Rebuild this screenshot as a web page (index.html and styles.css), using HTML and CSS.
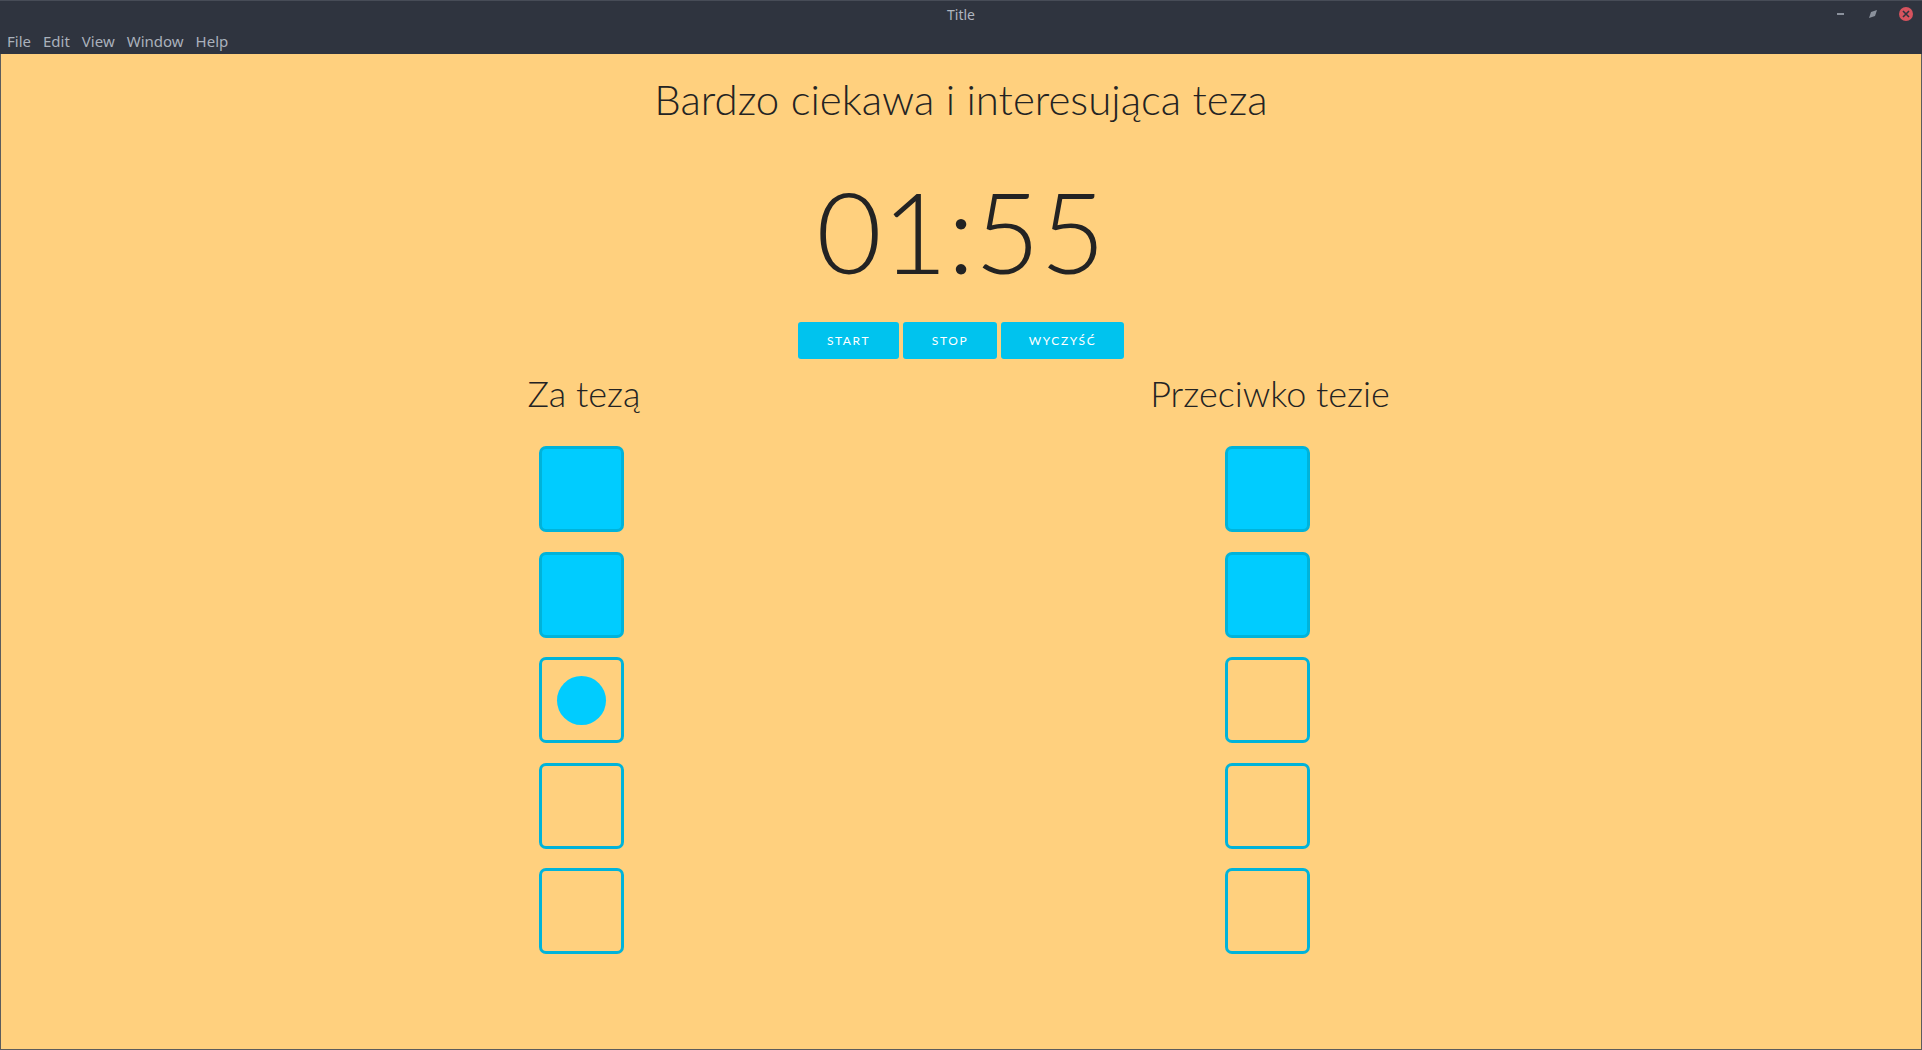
FILE: index.html
```html
<!DOCTYPE html>
<html lang="pl">
<head>
<meta charset="utf-8">
<title>Title</title>
<link rel="stylesheet" href="styles.css">
</head>
<body>
<div class="window">
  <div class="titlebar">
    <div class="title">Title</div>
    <div class="controls">
      <svg class="ctl" width="14" height="14" viewBox="0 0 14 14"><rect x="3" y="6" width="7" height="2" fill="#8b919c"/></svg>
      <svg class="ctl" width="14" height="14" viewBox="0 0 14 14"><path d="M5 5 L11 3 L9 9 Z M3 11 L5 5 L9 9 Z" fill="#8b919c"/></svg>
      <svg class="ctl close" width="16" height="16" viewBox="0 0 16 16"><circle cx="8" cy="8" r="7" fill="#d6535e"/><path d="M5 5 L11 11 M11 5 L5 11" stroke="#2f343f" stroke-width="1.6"/></svg>
    </div>
  </div>
  <div class="menubar">
    <span class="menu">File</span>
    <span class="menu">Edit</span>
    <span class="menu">View</span>
    <span class="menu">Window</span>
    <span class="menu">Help</span>
  </div>
  <main class="content">
    <h1 class="thesis">Bardzo ciekawa i interesująca teza</h1>
    <div class="timer">01:55</div>
    <div class="buttons">
      <button class="btn btn-start">START</button>
      <button class="btn btn-stop">STOP</button>
      <button class="btn btn-clear">WYCZYŚĆ</button>
    </div>
    <div class="columns">
      <section class="col">
        <h2 class="col-title">Za tezą</h2>
        <div class="boxes">
          <div class="box filled"></div>
          <div class="box filled"></div>
          <div class="box"><div class="dot"></div></div>
          <div class="box"></div>
          <div class="box"></div>
        </div>
      </section>
      <section class="col">
        <h2 class="col-title">Przeciwko tezie</h2>
        <div class="boxes">
          <div class="box filled"></div>
          <div class="box filled"></div>
          <div class="box"></div>
          <div class="box"></div>
          <div class="box"></div>
        </div>
      </section>
    </div>
  </main>
</div>
</body>
</html>
```

FILE: styles.css
```css
* { box-sizing: border-box; }
html, body { margin: 0; padding: 0; width: 1922px; height: 1050px; overflow: hidden; }
body { background: #5a5a5a; font-family: "Noto Sans", sans-serif; }

.window {
  width: 1922px;
  height: 1050px;
  display: flex;
  flex-direction: column;
  background: #2f343f;
  border-top: 1px solid #474c57;
}

.titlebar {
  position: relative;
  height: 26px;
  display: flex;
  align-items: center;
  justify-content: center;
}
.title {
  color: #afb5bf;
  font-size: 14px;
  line-height: 26px;
  padding-top: 2px;
}
.controls {
  position: absolute;
  right: 8px;
  top: 5px;
  display: flex;
  align-items: center;
  gap: 18px;
}
.ctl { display: block; }

.menubar {
  height: 27px;
  display: flex;
  align-items: center;
  padding-left: 7px;
  gap: 12px;
}
.menu {
  color: #aab1bc;
  font-size: 15px;
  line-height: 27px;
  padding-top: 1px;
}

.content {
  flex: 1;
  background: #ffd07e;
  border-left: 1px solid #5c5c5c;
  border-right: 1px solid #5c5c5c;
  border-bottom: 1px solid #5c5c5c;
  display: flex;
  flex-direction: column;
  align-items: center;
  color: #232323;
  font-family: "Lato", sans-serif;
}

.thesis {
  margin: 19px 0 0 0;
  font-weight: 300;
  font-size: 42px;
  line-height: 52px;
}

.timer {
  margin-top: 45px;
  font-weight: 300;
  font-size: 113px;
  line-height: 120px;
  letter-spacing: 0;
}

.buttons {
  margin-top: 32px;
  display: flex;
  gap: 4px;
}
.btn {
  height: 37px;
  border: 0;
  border-radius: 3px;
  background: #00c3ee;
  color: #ffffff;
  font-family: "Lato", sans-serif;
  font-weight: 400;
  font-size: 12px;
  letter-spacing: 1.6px;
  padding: 0;
}
.btn-start { width: 101px; }
.btn-stop { width: 94px; }
.btn-clear { width: 123px; }

.columns {
  align-self: flex-start;
  margin-left: 240px;
  display: grid;
  grid-template-columns: 686px 686px;
}
.col {
  display: flex;
  flex-direction: column;
  align-items: center;
}
.col-title {
  margin: 12px 0 0 0;
  font-weight: 300;
  font-size: 36px;
  line-height: 44px;
}
.boxes {
  margin-top: 31px;
  margin-right: 6px;
  display: flex;
  flex-direction: column;
  gap: 19.5px;
}
.box {
  width: 85px;
  height: 86px;
  border: 3px solid #00b3da;
  border-radius: 7px;
  display: flex;
  align-items: center;
  justify-content: center;
}
.box.filled { background: #00ccff; }
.dot {
  width: 49px;
  height: 49px;
  border-radius: 50%;
  background: #00ccff;
}
```
